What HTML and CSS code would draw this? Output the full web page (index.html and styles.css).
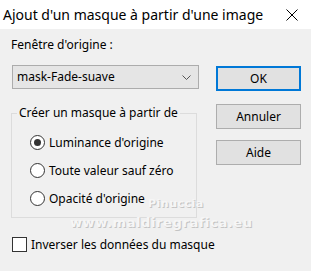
FILE: index.html
```html
<!DOCTYPE html>
<html lang="fr">
<head>
<meta charset="utf-8">
<title>Ajout d'un masque à partir d'une image</title>
<link rel="stylesheet" href="styles.css">
</head>
<body>
<div class="window">
  <div class="titlebar">
    <span class="title">Ajout d'un masque à partir d'une image</span>
    <svg class="close" width="12" height="12" viewBox="0 0 12 12"><path d="M0.5 0.5 L11.5 11.5 M11.5 0.5 L0.5 11.5" stroke="#000" stroke-width="1" fill="none"/></svg>
  </div>
  <div class="content">
    <div class="main">
      <div class="left">
        <div class="label">Fenêtre d'origine :</div>
        <div class="combo">
          <span>mask-Fade-suave</span>
          <svg class="chev" width="9" height="5" viewBox="0 0 9 5"><path d="M0.5 0.5 L4.5 4.5 L8.5 0.5" stroke="#555" stroke-width="1" fill="none"/></svg>
        </div>
        <fieldset class="group">
          <legend>Créer un masque à partir de</legend>
          <div class="radio-row"><span class="radio checked"></span><span>Luminance d'origine</span></div>
          <div class="radio-row"><span class="radio"></span><span>Toute valeur sauf zéro</span></div>
          <div class="radio-row"><span class="radio"></span><span>Opacité d'origine</span></div>
        </fieldset>
      </div>
      <div class="right">
        <div class="btn btn-default">OK</div>
        <div class="btn btn-cancel">Annuler</div>
        <div class="btn btn-help">Aide</div>
      </div>
    </div>
    <div class="check-row"><span class="checkbox"></span><span>Inverser les données du masque</span></div>
    <div class="wm wm1">Pinuccia</div>
    <div class="wm wm2">www.maldiregrafica.eu</div>
  </div>
</div>
</body>
</html>
```
FILE: styles.css
```css
html, body {
  margin: 0;
  padding: 0;
}
body {
  width: 311px;
  height: 271px;
  overflow: hidden;
  font-family: "Noto Sans", "Open Sans", sans-serif;
  font-size: 12px;
  color: #000;
  background: #f0f0f0;
}
.window {
  width: 311px;
  height: 271px;
  display: flex;
  flex-direction: column;
}
.titlebar {
  height: 29px;
  background: #fff;
  display: flex;
  align-items: center;
  padding-left: 3px;
}
.title {
  font-size: 14px;
  line-height: 20px;
  flex: 1;
}
.close {
  margin-right: 13px;
  margin-top: 1px;
}
.content {
  flex: 1;
  background: #f0f0f0;
  position: relative;
}
.main {
  display: flex;
  padding-left: 11px;
  gap: 17px;
}
.left {
  width: 188px;
  padding-top: 8px;
}
.label {
  line-height: 16px;
}
.combo {
  margin-top: 12px;
  margin-left: 1px;
  height: 22px;
  border: 1px solid #acacac;
  background: #e5e5e5;
  display: flex;
  align-items: center;
  padding-left: 4px;
  padding-right: 7px;
}
.combo span {
  flex: 1;
  line-height: 16px;
}
.chev {
  margin-top: 1px;
}
.group {
  margin: 16px 0 0 0;
  width: 186px;
  box-sizing: border-box;
  border: 1px solid #dcdcdc;
  padding: 13px 0 11px 0;
  min-width: 0;
}
.group legend {
  padding: 0 2px;
  margin-left: 5px;
  line-height: 16px;
  white-space: nowrap;
}
.radio-row {
  display: flex;
  align-items: center;
  height: 16px;
  gap: 4px;
  padding-left: 18px;
}
.radio-row + .radio-row {
  margin-top: 12px;
}
.radio {
  width: 15px;
  height: 15px;
  box-sizing: border-box;
  border: 1px solid #333;
  border-radius: 50%;
  background: #fff;
  position: relative;
  flex: none;
}
.radio.checked::after {
  content: "";
  position: absolute;
  left: 3px;
  top: 3px;
  width: 7px;
  height: 7px;
  border-radius: 50%;
  background: #333;
}
.right {
  width: 85px;
  padding-top: 37px;
  display: flex;
  flex-direction: column;
}
.btn {
  height: 25px;
  box-sizing: border-box;
  border: 1px solid #adadad;
  background: #e1e1e1;
  display: flex;
  align-items: center;
  justify-content: center;
  line-height: 16px;
}
.btn-default {
  border: 2px solid #0078d7;
}
.btn-cancel {
  margin-top: 13px;
}
.btn-help {
  margin-top: 11px;
}
.check-row {
  display: flex;
  align-items: center;
  gap: 4px;
  margin-top: 19px;
  padding-left: 12px;
  height: 15px;
}
.checkbox {
  width: 15px;
  height: 15px;
  box-sizing: border-box;
  border: 1px solid #333;
  background: #fff;
}
.wm {
  position: absolute;
  font-family: "DejaVu Sans", sans-serif;
  font-weight: bold;
  color: #f6f6f6;
  text-shadow: 1px 1px 0 #c4c4c4;
  pointer-events: none;
  white-space: nowrap;
}
.wm1 {
  left: 148px;
  top: 168px;
  font-size: 11px;
  letter-spacing: 0.5px;
}
.wm2 {
  left: 70px;
  top: 186px;
  font-size: 13px;
  letter-spacing: 0.6px;
}
```
